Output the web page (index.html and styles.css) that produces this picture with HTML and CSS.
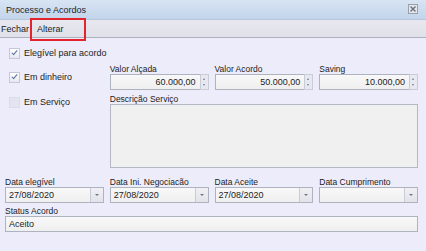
FILE: index.html
```html
<!DOCTYPE html>
<html lang="pt">
<head>
    <meta charset="UTF-8">
    <meta name="viewport" content="width=device-width, initial-scale=1.0">
    <title>Processo e Acordos</title>
    <link rel="stylesheet" href="styles.css">
</head>
<body>

    <div class="window">
        <!-- Title bar -->
        <div class="titlebar">
            <span class="title">Processo e Acordos</span>
            <svg class="close" width="10" height="10" viewBox="0 0 10 10">
                <rect x="0.5" y="0.5" width="9" height="9" fill="#e4e8ee" stroke="#9aa0aa"/>
                <path d="M2.5 2.5 L7.5 7.5 M7.5 2.5 L2.5 7.5" stroke="#6a707a" stroke-width="1.4"/>
            </svg>
        </div>

        <!-- Toolbar -->
        <div class="toolbar">
            <span class="tool">Fechar</span>
            <span class="tool highlight">Alterar</span>
        </div>

        <!-- Form -->
        <div class="form">
            <label class="check row-a"><span class="box checked"></span>Elegível para acordo</label>

            <label class="check row-b"><span class="box checked"></span>Em dinheiro</label>
            <div class="field">
                <span class="label">Valor Alçada</span>
                <div class="input spin"><span class="value num">60.000,00</span><span class="spinner"></span></div>
            </div>
            <div class="field">
                <span class="label">Valor Acordo</span>
                <div class="input spin"><span class="value num">50.000,00</span><span class="spinner"></span></div>
            </div>
            <div class="field">
                <span class="label">Saving</span>
                <div class="input spin"><span class="value num">10.000,00</span><span class="spinner"></span></div>
            </div>

            <label class="check row-c"><span class="box disabled"></span>Em Serviço</label>
            <div class="field wide">
                <span class="label">Descrição Serviço</span>
                <div class="memo"></div>
            </div>

            <div class="field date">
                <span class="label">Data elegível</span>
                <div class="input"><span class="value">27/08/2020</span><span class="drop"></span></div>
            </div>
            <div class="field date">
                <span class="label">Data Ini. Negociacão</span>
                <div class="input"><span class="value">27/08/2020</span><span class="drop"></span></div>
            </div>
            <div class="field date">
                <span class="label">Data Aceite</span>
                <div class="input"><span class="value">27/08/2020</span><span class="drop"></span></div>
            </div>
            <div class="field date">
                <span class="label">Data Cumprimento</span>
                <div class="input"><span class="value"></span><span class="drop"></span></div>
            </div>

            <div class="field status">
                <span class="label">Status Acordo</span>
                <div class="input"><span class="value">Aceito</span></div>
            </div>
        </div>
    </div>

</body>
</html>
```

FILE: styles.css
```css
body {
    margin: 0;
    padding: 0;
    font-family: "Liberation Sans", Arial, sans-serif;
    font-size: 8.5px;
    color: #1c1c1c;
    background-color: #ececfa;
}

.window {
    width: 426px;
    height: 251px;
    background-color: #ececfa; /* lavender panel */
    overflow: hidden;
}

/* Title bar */
.titlebar {
    height: 19px;
    display: flex;
    align-items: center;
    justify-content: space-between;
    padding: 0 8px 0 6px;
    background: linear-gradient(#d7e4f3, #c3d5eb);
    font-size: 9px;
    color: #20242c;
}

.close {
    display: block;
    margin-top: -1px;
}

/* Toolbar */
.toolbar {
    height: 17px;
    display: flex;
    align-items: center;
    background: linear-gradient(#e8e8f0, #e0e0ea);
    border-top: 1px solid #b8c6d8;
    border-bottom: 1px solid #aab0bc;
    font-size: 9px;
}

.tool {
    padding: 0 7px 0 1px;
}

.tool.highlight {
    position: relative;
    padding-left: 1px;
}

/* red annotation box */
.tool.highlight::after {
    content: "";
    position: absolute;
    left: -6px;
    top: -6px;
    width: 52px;
    height: 19px;
    border: 2px solid #e2242c;
}

/* Form grid */
.form {
    display: grid;
    grid-template-columns: repeat(4, 1fr);
    column-gap: 6px;
    row-gap: 4px;
    padding: 8px 8px 0 5px;
}

.check {
    display: flex;
    align-items: center;
    height: 14px;
    padding-left: 4px;
    font-size: 9px;
}

.row-a {
    grid-column: 1 / -1;
}

.row-b {
    align-self: start;
    margin-top: 6px;
}

.row-c {
    align-self: start;
    margin-top: 1px;
}

.box {
    width: 9px;
    height: 9px;
    margin-right: 4px;
    border: 1px solid #c4c8d6;
    background: linear-gradient(#ffffff, #e6e8f0);
    position: relative;
}

.box.checked::after {
    content: "";
    position: absolute;
    left: 3px;
    top: 0px;
    width: 2px;
    height: 5px;
    border: solid #5a72a0;
    border-width: 0 1.5px 1.5px 0;
    transform: rotate(40deg);
}

.box.disabled {
    border-color: #dcdce8;
    background: #e4e4f0;
}

.field {
    display: flex;
    flex-direction: column;
}

.label {
    line-height: 10px;
    height: 10px;
    white-space: nowrap;
}

.input {
    height: 14px;
    display: flex;
    border: 1px solid #aeb3c0;
    background: linear-gradient(#f8f8f8, #efeff0);
}

.value {
    flex: 1;
    line-height: 14px;
    padding: 0 3px;
    font-size: 9px;
}

.num {
    text-align: right;
}

.spin {
    border-right: none;
}

.spinner {
    width: 7px;
    border: 1px solid #c8ccd6;
    margin: -1px 0 -1px 1px;
    background-color: #e8e8f0;
    position: relative;
}

.spinner::before,
.spinner::after {
    content: "";
    position: absolute;
    left: 2px;
    border-left: 1.5px solid transparent;
    border-right: 1.5px solid transparent;
}

.spinner::before {
    top: 3px;
    border-bottom: 2px solid #6a7890;
}

.spinner::after {
    bottom: 3px;
    border-top: 2px solid #6a7890;
}

.drop {
    width: 12px;
    border-left: 1px solid #c8ccd6;
    background: linear-gradient(#f0f0f4, #e2e2ea);
    position: relative;
}

.drop::after {
    content: "";
    position: absolute;
    left: 4px;
    top: 6px;
    border-left: 2px solid transparent;
    border-right: 2px solid transparent;
    border-top: 2px solid #6a7890;
}

.wide {
    grid-column: 2 / 5;
}

.memo {
    height: 62px;
    border: 1px solid #b4b8c4;
    background-color: #f0f0f0;
}

.date {
    margin-top: 5px;
}

.status {
    grid-column: 1 / -1;
    margin-top: -1px;
}
```
